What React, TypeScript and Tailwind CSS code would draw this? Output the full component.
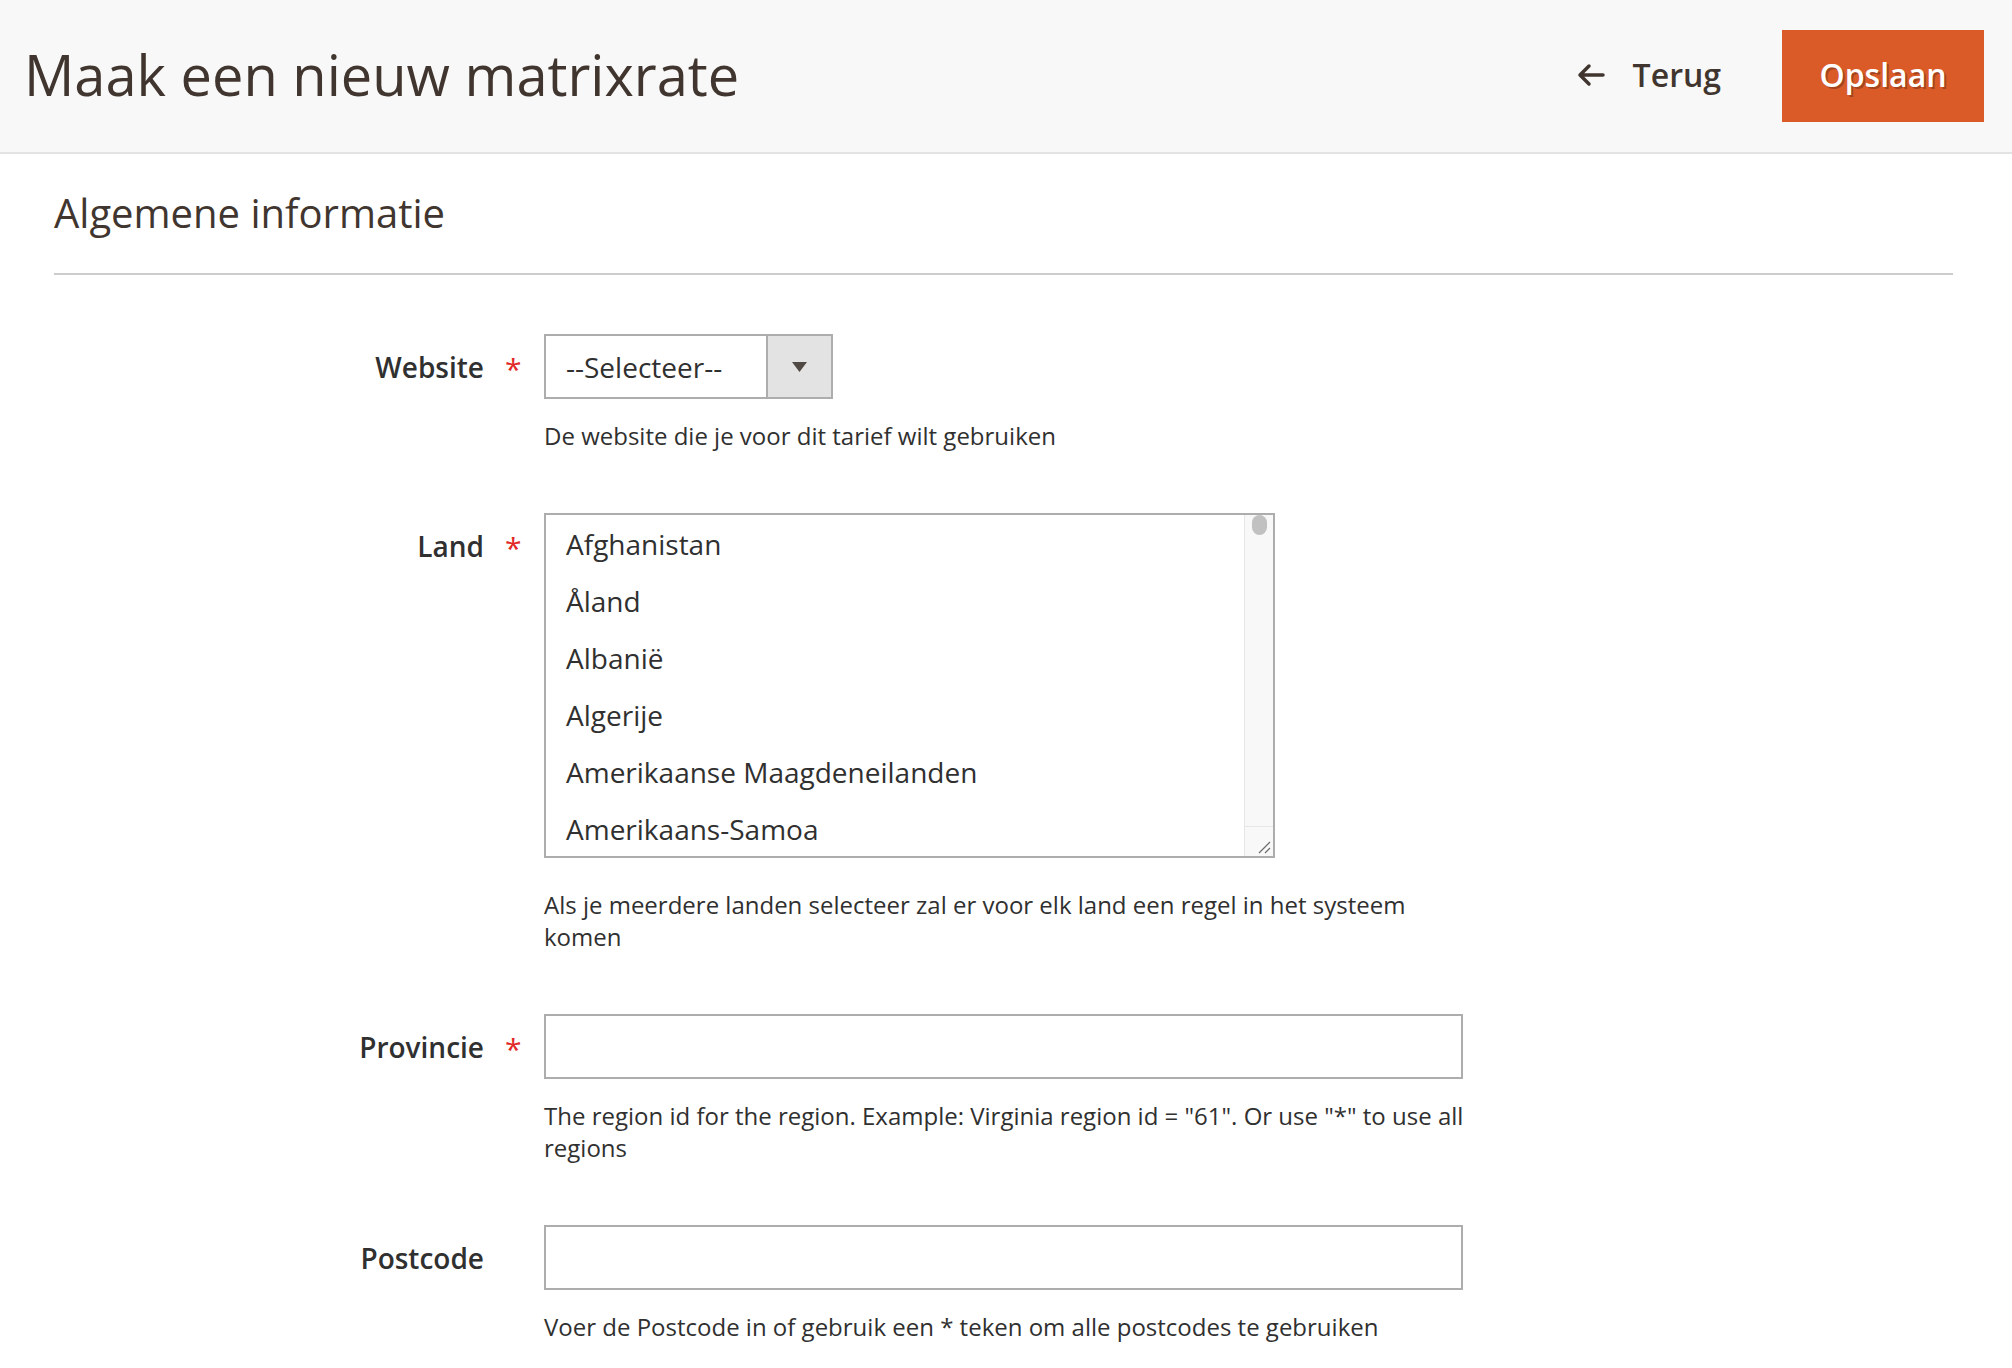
const countries = [
  "Afghanistan",
  "Åland",
  "Albanië",
  "Algerije",
  "Amerikaanse Maagdeneilanden",
  "Amerikaans-Samoa",
];

function Label({ text, required }: { text: string; required?: boolean }) {
  return (
    <>
      <div className="w-[430px] h-[65px] flex items-center justify-end text-[28px] font-semibold text-[#303030]">
        {text}
      </div>
      <div className="w-[60px] h-[65px] flex items-center pl-[21px] pt-[3px] text-[30px] text-[#e22626]">
        {required ? "*" : ""}
      </div>
    </>
  );
}

function Note({ children, className = "" }: { children: React.ReactNode; className?: string }) {
  return (
    <p className={`w-[922px] text-[24px] leading-[32px] text-[#303030] ${className}`}>{children}</p>
  );
}

export default function App() {
  return (
    <div className="min-h-screen bg-white text-[#303030] font-['Open_Sans',sans-serif]">
      <header className="h-[154px] flex items-center justify-between pl-[24px] pr-[28px] bg-[#f8f8f8] border-b-2 border-[#e3e3e3]">
        <h1 className="text-[56px] leading-none text-[#41362f] -mt-[5px]">Maak een nieuw matrixrate</h1>
        <div className="flex items-center">
          <button className="flex items-center gap-[28px] text-[32px] font-semibold text-[#41362f] -mt-[2px]">
            <svg width="28" height="24" viewBox="0 0 28 24" fill="none">
              <path
                d="M26 12H3M12 3L3 12L12 21"
                stroke="#41362f"
                strokeWidth="3.5"
                strokeLinecap="round"
                strokeLinejoin="round"
              />
            </svg>
            Terug
          </button>
          <button className="ml-[61px] w-[202px] h-[92px] pb-[2px] bg-[#db5b28] text-white text-[32px] font-semibold [text-shadow:2px_2px_0_rgba(0,0,0,0.25)]">
            Opslaan
          </button>
        </div>
      </header>

      <section className="pl-[54px] pr-[59px] pt-[35px]">
        <div className="pb-[36px] border-b-2 border-[#cccccc]">
          <h2 className="text-[40px] leading-[48px] text-[#41362f]">Algemene informatie</h2>
        </div>

        <div className="pt-[59px]">
          {/* Website */}
          <div className="flex mb-[61px]">
            <Label text="Website" required />
            <div>
              <div className="w-[289px] h-[65px] border-2 border-[#adadad] flex bg-white">
                <div className="flex-1 flex items-center pl-[20px] text-[28px]">--Selecteer--</div>
                <div className="w-[65px] bg-[#e3e3e3] border-l-2 border-[#adadad] flex items-center justify-center">
                  <svg width="15" height="10" viewBox="0 0 15 10">
                    <polygon points="0,0 15,0 7.5,10" fill="#514943" />
                  </svg>
                </div>
              </div>
              <Note className="mt-[21px]">De website die je voor dit tarief wilt gebruiken</Note>
            </div>
          </div>

          {/* Land */}
          <div className="flex mb-[61px]">
            <Label text="Land" required />
            <div>
              <div className="w-[731px] h-[345px] border-2 border-[#adadad] flex overflow-hidden bg-white">
                <ul className="flex-1 overflow-hidden">
                  {countries.map((c) => (
                    <li key={c} className="h-[57px] flex items-center pl-[20px] text-[28px]">
                      {c}
                    </li>
                  ))}
                </ul>
                <div className="w-[29px] bg-[#f8f8f8] border-l border-[#e6e6e6] flex flex-col">
                  <div className="flex-1">
                    <div className="mx-auto w-[15px] h-[20px] rounded-full bg-[#c1c1c1]" />
                  </div>
                  <div className="h-[30px] border-t border-[#e6e6e6] flex items-end justify-end pr-[2px] pb-[2px]">
                    <svg width="14" height="14" viewBox="0 0 14 14">
                      <path d="M13 2L2 13M13 8L8 13" stroke="#6b6b6b" strokeWidth="1.2" />
                    </svg>
                  </div>
                </div>
              </div>
              <Note className="mt-[31px]">
                Als je meerdere landen selecteer zal er voor elk land een regel in het systeem komen
              </Note>
            </div>
          </div>

          {/* Provincie */}
          <div className="flex mb-[61px]">
            <Label text="Provincie" required />
            <div>
              <input className="block w-[919px] h-[65px] border-2 border-[#adadad] bg-white outline-none px-[20px] text-[28px]" />
              <Note className="mt-[21px]">
                The region id for the region. Example: Virginia region id = "61". Or use "*" to use all regions
              </Note>
            </div>
          </div>

          {/* Postcode */}
          <div className="flex mb-[40px]">
            <Label text="Postcode" />
            <div>
              <input className="block w-[919px] h-[65px] border-2 border-[#adadad] bg-white outline-none px-[20px] text-[28px]" />
              <Note className="mt-[21px]">
                Voer de Postcode in of gebruik een * teken om alle postcodes te gebruiken
              </Note>
            </div>
          </div>
        </div>
      </section>
    </div>
  );
}
